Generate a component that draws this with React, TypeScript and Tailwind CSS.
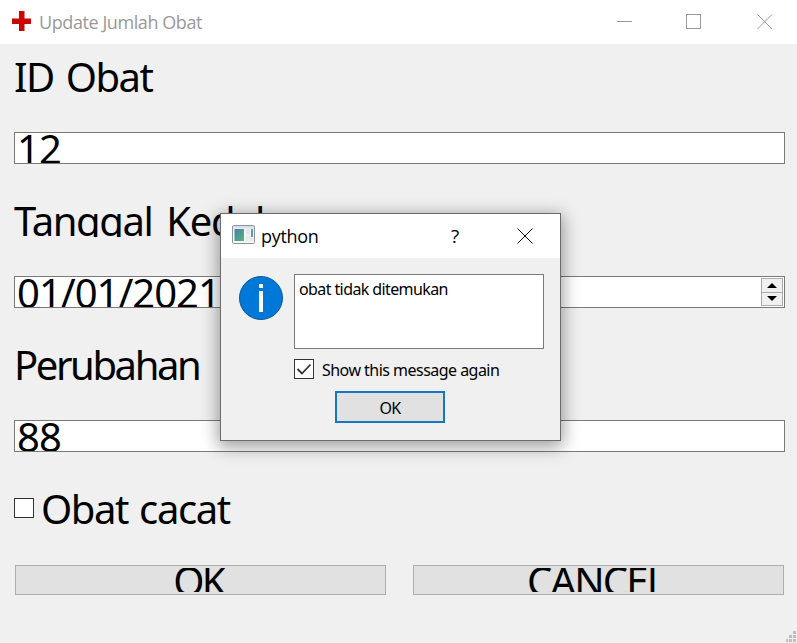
import type { ReactNode } from "react";

const FONT = "font-['Noto_Sans','DejaVu_Sans',sans-serif]";
const TITLE_FONT = "font-['Open_Sans','Noto_Sans',sans-serif]";

function Label({ children }: { children: ReactNode }) {
  return (
    <div className="h-8 overflow-hidden whitespace-nowrap text-[40px] leading-8">
      {children}
    </div>
  );
}

function Field({ children, spinner }: { children: ReactNode; spinner?: boolean }) {
  return (
    <div className="mt-[39px] mb-[41px] flex h-8 justify-between overflow-hidden border border-[#7a7a7a] bg-white pl-[2px] whitespace-nowrap text-[40px] leading-[31px] tracking-[-1px]">
      {children}
      {spinner && (
        <div className="my-px mr-px flex w-[22px] flex-col">
          <div className="flex flex-1 items-center justify-center border border-[#acacac] bg-[#f0f0f0]">
            <svg width="10" height="5" viewBox="0 0 10 5"><path d="M5 0L10 5H0Z" fill="#000" /></svg>
          </div>
          <div className="-mt-px flex flex-1 items-center justify-center border border-[#acacac] bg-[#f0f0f0]">
            <svg width="10" height="5" viewBox="0 0 10 5"><path d="M5 5L0 0H10Z" fill="#000" /></svg>
          </div>
        </div>
      )}
    </div>
  );
}

function FormButton({ children }: { children: ReactNode }) {
  return (
    <button className="h-[30px] w-[371px] border border-[#adadad] bg-[#e1e1e1] py-[2px] text-[40px]">
      <span className="flex h-6 justify-center overflow-hidden pr-[4px] leading-[26px]">{children}</span>
    </button>
  );
}

function Dialog() {
  return (
    <div className="absolute top-[213px] left-[220px] flex h-[228px] w-[341px] flex-col border border-[#6b6b6b] bg-[#f0f0f0] shadow-[0_4px_16px_2px_rgba(0,0,0,0.38)]">
      <div className={`flex h-[44px] shrink-0 items-center bg-white pl-[11px] text-[18px] ${TITLE_FONT}`}>
        <svg width="23" height="19" viewBox="0 0 23 19" className="-mt-[3px]">
          <rect x="0.5" y="0.5" width="22" height="18" rx="1" fill="#f3f6f8" stroke="#8b939b" />
          <rect x="1" y="1" width="21" height="2.5" fill="#d9dfe5" />
          <defs>
            <linearGradient id="pane" x1="0" y1="0" x2="1" y2="1">
              <stop offset="0" stopColor="#3f7fae" />
              <stop offset="1" stopColor="#5cb574" />
            </linearGradient>
          </defs>
          <rect x="2.5" y="4" width="9.5" height="12" fill="url(#pane)" />
          <rect x="14" y="4" width="4" height="5" fill="#e3e6e9" />
          <rect x="14" y="10.5" width="7" height="5.5" fill="#e9ebed" />
          <rect x="19" y="4" width="2" height="8" fill="#5f9ca5" />
        </svg>
        <span className="ml-[6px] w-[184px] tracking-[-0.3px]">python</span>
        <span className="w-[20px] text-center text-[19px]">?</span>
        <svg width="16" height="16" viewBox="0 0 16 16" className="ml-[52px]">
          <path d="M0.5 0.5L15.5 15.5M15.5 0.5L0.5 15.5" stroke="#000" strokeWidth="0.95" />
        </svg>
      </div>
      <div className="flex pt-4 pl-[18px] text-[16px]">
        <svg width="44" height="44" viewBox="0 0 44 44" className="mt-[2px]">
          <circle cx="22" cy="22" r="21.5" fill="#0078d7" stroke="#0a5a9c" />
          <rect x="20" y="8" width="4" height="4" fill="#fff" />
          <rect x="20" y="15" width="4" height="21" fill="#fff" />
        </svg>
        <div className="ml-[11px] w-[250px]">
          <div className="h-[75px] border border-[#7a7a7a] bg-white pt-[4px] pl-[4px] leading-5">
            <span className="tracking-[-0.6px]">obat tidak ditemukan</span>
          </div>
          <div className="mt-[10px] flex h-5 items-center">
            <div className="h-5 w-5 border border-[#333] bg-white">
              <svg width="18" height="18" viewBox="0 0 18 18">
                <path d="M2.5 9L7 13.5L15.5 4.5" fill="none" stroke="#333" strokeWidth="1.8" />
              </svg>
            </div>
            <span className="mt-[2px] ml-2 tracking-[-0.53px] whitespace-nowrap">Show this message again</span>
          </div>
          <button className="mt-3 ml-[41px] flex h-8 w-[110px] items-center justify-center border-2 border-[#1278c4] bg-[#e1e1e1] pt-[2px]">
            <span className="tracking-[-0.8px]">OK</span>
          </button>
        </div>
      </div>
    </div>
  );
}

export default function App() {
  return (
    <div className={`relative h-[643px] w-[797px] overflow-hidden bg-[#f0f0f0] text-black ${FONT}`}>
      <header className={`flex h-[44px] items-center bg-white pl-3 text-[18px] text-[#999] ${TITLE_FONT}`}>
        <svg width="20" height="20" viewBox="0 0 20 20" className="-mt-[3px]">
          <path d="M7 0H12.5V7.5H19V13H12.5V20H7V13H0V7.5H7Z" fill="#cc0605" />
        </svg>
        <span className="ml-[7px] flex-1 tracking-[-0.42px]">Update Jumlah Obat</span>
        <svg width="156" height="16" viewBox="0 0 156 16" className="mr-[24px]" fill="none" stroke="#999">
          <path d="M0 7.5H15" />
          <rect x="69.5" y="0.5" width="14" height="14" />
          <path d="M140.5 0.5L155 15M155 0.5L140.5 15" />
        </svg>
      </header>
      <main className="px-[14px] pt-[17px] pr-[12px]">
        <Label><span className="tracking-[-1.5px] [word-spacing:3px]">ID Obat</span></Label>
        <Field><span>12</span></Field>
        <Label><span className="tracking-[-1.4px] [word-spacing:5px]">Tanggal Kedaluarsa</span></Label>
        <Field spinner><span>01/01/2021</span></Field>
        <Label><span className="tracking-[-2.4px] [word-spacing:10px]">Perubahan Jumlah</span></Label>
        <Field><span>88</span></Field>
        <div className="flex h-8 items-center text-[40px] leading-8 whitespace-nowrap tracking-[-1.4px]">
          <div className="-mt-[2px] h-5 w-5 border border-[#333] bg-white" />
          <span className="ml-[7px] [word-spacing:2px]">Obat cacat</span>
        </div>
        <div className="mt-10 flex gap-[27px] pl-px">
          <FormButton><span className="tracking-[-2.8px]">OK</span></FormButton>
          <FormButton><span className="tracking-[-1.8px]">CANCEL</span></FormButton>
        </div>
      </main>
      <Dialog />
      <svg width="11" height="12" viewBox="0 0 11 12" fill="#bfbfbf" className="absolute right-0 bottom-0">
        <path d="M7 0h3v3h-3zM3 4h3v3H3zM7 4h3v3h-3zM0 8h2v3H0zM3 8h3v3H3zM7 8h3v3h-3z" />
      </svg>
    </div>
  );
}
